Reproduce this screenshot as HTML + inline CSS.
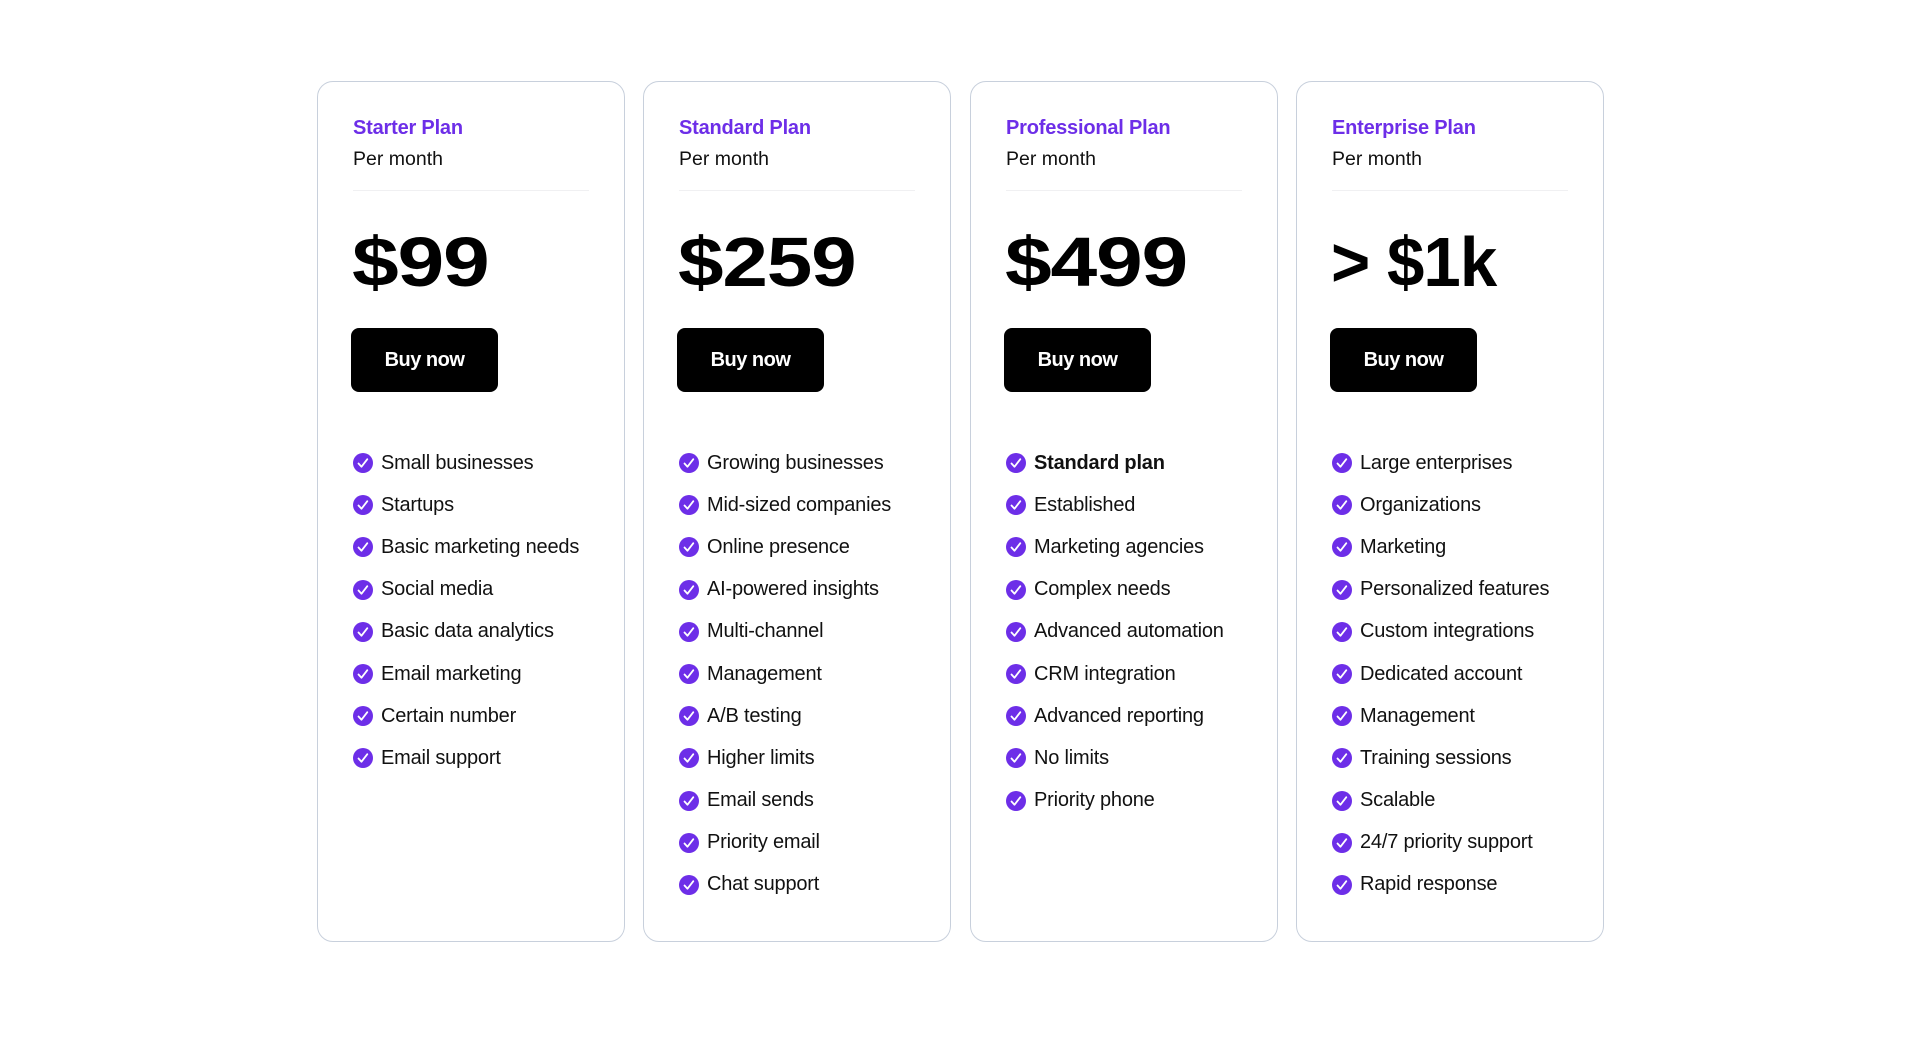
<!DOCTYPE html>
<html><head><style>
*{margin:0;padding:0;box-sizing:border-box}
body{width:1920px;height:1038px;background:#fff;font-family:"Liberation Sans",sans-serif;color:#111;position:relative;overflow:hidden}
.card{position:absolute;top:81px;width:308px;height:861px;border:1.5px solid #c8d0dc;border-radius:16px}
.t{position:absolute;left:35px;top:35px;font-size:20px;font-weight:bold;color:#6d2ee8;letter-spacing:-0.2px}
.pm{position:absolute;left:35px;top:66px;font-size:19.5px;color:#111}
.hr{position:absolute;left:35px;top:108px;width:236px;height:1px;background:#f0f0f2}
.pr{position:absolute;left:34px;top:140px;font-size:70px;font-weight:bold;letter-spacing:-1px;color:#000;transform-origin:left center;white-space:nowrap}
.btn{position:absolute;left:33px;top:246px;width:147px;height:64px;background:#000;border-radius:8px;color:#fff;font-size:20px;font-weight:bold;text-align:center;line-height:64px;letter-spacing:-0.5px}
ul{position:absolute;left:35px;top:360px;list-style:none}
li{height:42.2px;font-size:20px;display:flex;align-items:center;gap:8px;letter-spacing:-0.2px;position:relative}
</style></head><body>
<svg width="0" height="0" style="position:absolute"><defs><symbol id="c" viewBox="0 0 20 20"><circle cx="10" cy="10" r="10" fill="#6d2ee8"/><path d="M5.5 10.5l3 3.2 5.8-7.5" fill="none" stroke="#fff" stroke-width="1.8" stroke-linecap="round" stroke-linejoin="round"/></symbol></defs></svg>

<div class="card" style="left:317px">
<div class="t">Starter Plan</div><div class="pm">Per month</div><div class="hr"></div>
<div class="pr" style="transform:scaleX(1.2)">$99</div><div class="btn">Buy now</div>
<ul>
<li><svg width="20" height="20"><use href="#c"/></svg>Small businesses</li>
<li><svg width="20" height="20"><use href="#c"/></svg>Startups</li>
<li><svg width="20" height="20"><use href="#c"/></svg>Basic marketing needs</li>
<li><svg width="20" height="20"><use href="#c"/></svg>Social media</li>
<li><svg width="20" height="20"><use href="#c"/></svg>Basic data analytics</li>
<li><svg width="20" height="20"><use href="#c"/></svg>Email marketing</li>
<li><svg width="20" height="20"><use href="#c"/></svg>Certain number</li>
<li><svg width="20" height="20"><use href="#c"/></svg>Email support</li>
</ul></div>

<div class="card" style="left:643px">
<div class="t">Standard Plan</div><div class="pm">Per month</div><div class="hr"></div>
<div class="pr" style="transform:scaleX(1.17)">$259</div><div class="btn">Buy now</div>
<ul>
<li><svg width="20" height="20"><use href="#c"/></svg>Growing businesses</li>
<li><svg width="20" height="20"><use href="#c"/></svg>Mid-sized companies</li>
<li><svg width="20" height="20"><use href="#c"/></svg>Online presence</li>
<li><svg width="20" height="20"><use href="#c"/></svg>AI-powered insights</li>
<li><svg width="20" height="20"><use href="#c"/></svg>Multi-channel</li>
<li><svg width="20" height="20"><use href="#c"/></svg>Management</li>
<li><svg width="20" height="20"><use href="#c"/></svg>A/B testing</li>
<li><svg width="20" height="20"><use href="#c"/></svg>Higher limits</li>
<li><svg width="20" height="20"><use href="#c"/></svg>Email sends</li>
<li><svg width="20" height="20"><use href="#c"/></svg>Priority email</li>
<li><svg width="20" height="20"><use href="#c"/></svg>Chat support</li>
</ul></div>

<div class="card" style="left:970px">
<div class="t">Professional Plan</div><div class="pm">Per month</div><div class="hr"></div>
<div class="pr" style="transform:scaleX(1.2)">$499</div><div class="btn">Buy now</div>
<ul>
<li style="font-weight:bold"><svg width="20" height="20"><use href="#c"/></svg>Standard plan</li>
<li><svg width="20" height="20"><use href="#c"/></svg>Established</li>
<li><svg width="20" height="20"><use href="#c"/></svg>Marketing agencies</li>
<li><svg width="20" height="20"><use href="#c"/></svg>Complex needs</li>
<li><svg width="20" height="20"><use href="#c"/></svg>Advanced automation</li>
<li><svg width="20" height="20"><use href="#c"/></svg>CRM integration</li>
<li><svg width="20" height="20"><use href="#c"/></svg>Advanced reporting</li>
<li><svg width="20" height="20"><use href="#c"/></svg>No limits</li>
<li><svg width="20" height="20"><use href="#c"/></svg>Priority phone</li>
</ul></div>

<div class="card" style="left:1296px">
<div class="t">Enterprise Plan</div><div class="pm">Per month</div><div class="hr"></div>
<div class="pr" style="transform:scaleX(0.96)">&gt; $1k</div><div class="btn">Buy now</div>
<ul>
<li><svg width="20" height="20"><use href="#c"/></svg>Large enterprises</li>
<li><svg width="20" height="20"><use href="#c"/></svg>Organizations</li>
<li><svg width="20" height="20"><use href="#c"/></svg>Marketing</li>
<li><svg width="20" height="20"><use href="#c"/></svg>Personalized features</li>
<li><svg width="20" height="20"><use href="#c"/></svg>Custom integrations</li>
<li><svg width="20" height="20"><use href="#c"/></svg>Dedicated account</li>
<li><svg width="20" height="20"><use href="#c"/></svg>Management</li>
<li><svg width="20" height="20"><use href="#c"/></svg>Training sessions</li>
<li><svg width="20" height="20"><use href="#c"/></svg>Scalable</li>
<li><svg width="20" height="20"><use href="#c"/></svg>24/7 priority support</li>
<li><svg width="20" height="20"><use href="#c"/></svg>Rapid response</li>
</ul></div>
</body></html>
